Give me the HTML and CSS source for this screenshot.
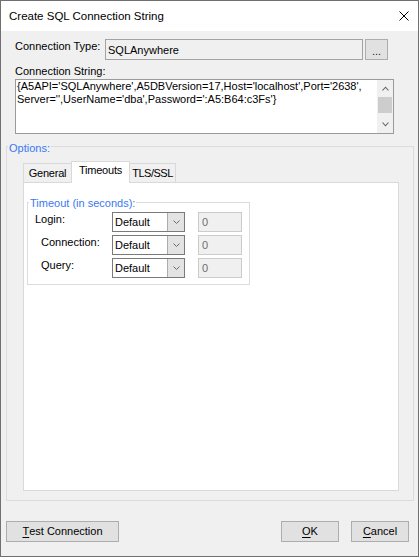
FILE: index.html
```html
<!DOCTYPE html>
<html>
<head>
<meta charset="utf-8">
<link rel="stylesheet" href="styles.css">
</head>
<body>
<div class="window">
  <div class="titlebar">
    <span class="title">Create SQL Connection String</span>
    <svg class="close" width="10" height="10" viewBox="0 0 10 10"><path d="M0.5 0.5L9.5 9.5M9.5 0.5L0.5 9.5" stroke="#000" stroke-width="1" fill="none"/></svg>
  </div>
  <div class="client">
    <div class="type-row">
      <span class="type-lbl">Connection Type:</span>
      <div class="textbox">SQLAnywhere</div>
      <div class="btn dots">...</div>
    </div>
    <div class="cs-lbl">Connection String:</div>
    <div class="memo">
      <div class="memo-text">{A5API='SQLAnywhere',A5DBVersion=17,Host='localhost',Port='2638',<br>Server='',UserName='dba',Password=':A5:B64:c3Fs'}</div>
      <div class="vscroll">
        <div class="sb-arrow"><svg width="7" height="5" viewBox="0 0 7 5"><path d="M0.5 4.5L3.5 1.2L6.5 4.5" stroke="#606060" stroke-width="1.1" fill="none"/></svg></div>
        <div class="sb-thumb"></div>
        <div class="sb-track"></div>
        <div class="sb-arrow"><svg width="7" height="5" viewBox="0 0 7 5"><path d="M0.5 0.5L3.5 3.8L6.5 0.5" stroke="#606060" stroke-width="1.1" fill="none"/></svg></div>
      </div>
    </div>
    <div class="group options">
      <span class="group-title">Options:</span>
      <div class="tabs">
        <div class="tab first">General</div>
        <div class="tab active">Timeouts</div>
        <div class="tab last">TLS/SSL</div>
      </div>
      <div class="tabpanel">
        <div class="group timeout">
          <span class="group-title">Timeout (in seconds):</span>
          <div class="tgrid">
            <span class="tlbl">Login:</span>
            <div class="combo"><span class="combo-text">Default</span><span class="dd"><svg width="7" height="4" viewBox="0 0 7 4"><path d="M0.5 0.5L3.5 3.5L6.5 0.5" stroke="#6a6a6a" stroke-width="1" fill="none"/></svg></span></div>
            <div class="numbox">0</div>
            <span class="tlbl ind">Connection:</span>
            <div class="combo"><span class="combo-text">Default</span><span class="dd"><svg width="7" height="4" viewBox="0 0 7 4"><path d="M0.5 0.5L3.5 3.5L6.5 0.5" stroke="#6a6a6a" stroke-width="1" fill="none"/></svg></span></div>
            <div class="numbox">0</div>
            <span class="tlbl ind">Query:</span>
            <div class="combo"><span class="combo-text">Default</span><span class="dd"><svg width="7" height="4" viewBox="0 0 7 4"><path d="M0.5 0.5L3.5 3.5L6.5 0.5" stroke="#6a6a6a" stroke-width="1" fill="none"/></svg></span></div>
            <div class="numbox">0</div>
          </div>
        </div>
      </div>
    </div>
    <div class="buttons">
      <div class="btn test"><u>T</u>est Connection</div>
      <div class="spacer"></div>
      <div class="btn ok"><u>O</u>K</div>
      <div class="btn cancel"><u>C</u>ancel</div>
    </div>
  </div>
</div>
</body>
</html>
```

FILE: styles.css
```css
* { box-sizing: border-box; }
html, body { margin: 0; padding: 0; }
body {
  width: 419px;
  height: 557px;
  overflow: hidden;
  background: #f0f0f0;
  font-family: "Liberation Sans", Arial, sans-serif;
  font-size: 11px;
  line-height: 15px;
  color: #000;
}
.window {
  width: 419px;
  height: 557px;
  border: 1px solid #707070;
  background: #f0f0f0;
  display: flex;
  flex-direction: column;
}
.titlebar {
  height: 30px;
  flex: none;
  background: #fff;
  display: flex;
  align-items: center;
  justify-content: space-between;
  padding: 0 9px 0 8px;
}
.title { font-size: 11.5px; }
.close { display: block; margin-top: -1px; }

.client {
  flex: 1;
  display: flex;
  flex-direction: column;
  padding: 8px 4px 0 5px;
}
.type-row {
  display: flex;
  align-items: flex-start;
  margin-left: 9px;
  height: 21px;
}
.type-lbl { width: 90px; }
.textbox {
  width: 258px;
  height: 21px;
  border: 1px solid #a2a2a2;
  background: #f0f0f0;
  padding: 3px 2px 0;
}
.btn {
  background: #e1e1e1;
  border: 1px solid #adadad;
  display: flex;
  align-items: center;
  justify-content: center;
}
.dots {
  margin-left: 2px;
  width: 23px;
  height: 21px;
  padding-top: 3px;
  color: #202050;
}
.cs-lbl { margin: 4px 0 0 9px; }
.memo {
  margin-left: 9px;
  width: 379px;
  height: 55px;
  border: 1px solid #9a9a9a;
  background: #fff;
  display: flex;
}
.memo-text {
  flex: 1;
  padding: 0 0 0 1px;
  line-height: 13px;
  white-space: nowrap;
  overflow: hidden;
}
.vscroll {
  width: 17px;
  border-left: 1px solid #fff;
  background: #f0f0f0;
  display: flex;
  flex-direction: column;
}
.sb-arrow {
  height: 17px;
  display: flex;
  align-items: center;
  justify-content: center;
}
.sb-arrow svg { display: block; }
.sb-thumb {
  height: 16px;
  margin: 0 1px;
  background: #cdcdcd;
}
.sb-track { flex: 1; }

.group {
  border: 1px solid #dcdcdc;
  display: flex;
  flex-direction: column;
  align-items: flex-start;
}
.group-title {
  display: block;
  padding: 0 1px;
  margin-left: 1px;
  line-height: 15px;
  background: #f0f0f0;
  color: #3a78f2;
}
.options {
  margin-top: 12px;
  align-items: stretch;
}
.options > .group-title {
  align-self: flex-start;
  margin-top: -6px;
}
.tabs {
  display: flex;
  align-items: flex-end;
  margin: 5px 0 0 16px;
  height: 21px;
}
.tab {
  height: 19px;
  border: 1px solid #d9d9d9;
  border-bottom: none;
  background: #f0f0f0;
  padding-top: 2px;
  text-align: center;
  white-space: nowrap;
  letter-spacing: -0.2px;
}
.tab.first { width: 48px; border-right: none; }
.tab.active {
  position: relative;
  width: 59px;
  height: 22px;
  margin-bottom: -1px;
  background: #fff;
  padding-top: 1px;
}
.tab.last { width: 46px; border-left: none; letter-spacing: -0.5px; }
.tabpanel {
  margin: 0 14px 9px 16px;
  height: 309px;
  border: 1px solid #d9d9d9;
  background: #fff;
}
.timeout {
  margin: 19px 0 0 3px;
  width: 223px;
}
.timeout > .group-title {
  margin-top: -7px;
  background: #fff;
}
.tgrid {
  display: grid;
  grid-template-columns: 64px 73px 44px;
  grid-auto-rows: 20px;
  column-gap: 13px;
  row-gap: 3px;
  padding: 1px 7px 6px 7px;
}
.tlbl { line-height: 15px; white-space: nowrap; }
.tlbl.ind { padding-left: 6px; }
.combo {
  height: 20px;
  border: 1px solid #7a7a7a;
  background: #fff;
  display: flex;
}
.combo-text {
  flex: 1;
  padding: 2px 0 0 2px;
}
.dd {
  width: 17px;
  background: #e3e3e3;
  border-left: 1px solid #acacac;
  display: flex;
  align-items: center;
  justify-content: center;
}
.dd svg { display: block; }
.numbox {
  height: 20px;
  border: 1px solid #cccccc;
  background: #f0f0f0;
  color: #6d6d6d;
  padding: 2px 0 0 3px;
}
.buttons {
  display: flex;
  margin-top: 20px;
  margin-right: 5px;
}
.buttons .btn { height: 21px; }
.test { width: 113px; }
.spacer { flex: 1; }
.ok { width: 58px; }
.cancel { width: 58px; margin-left: 12px; }
u { text-decoration-thickness: 1px; text-underline-offset: 2px; }
```
